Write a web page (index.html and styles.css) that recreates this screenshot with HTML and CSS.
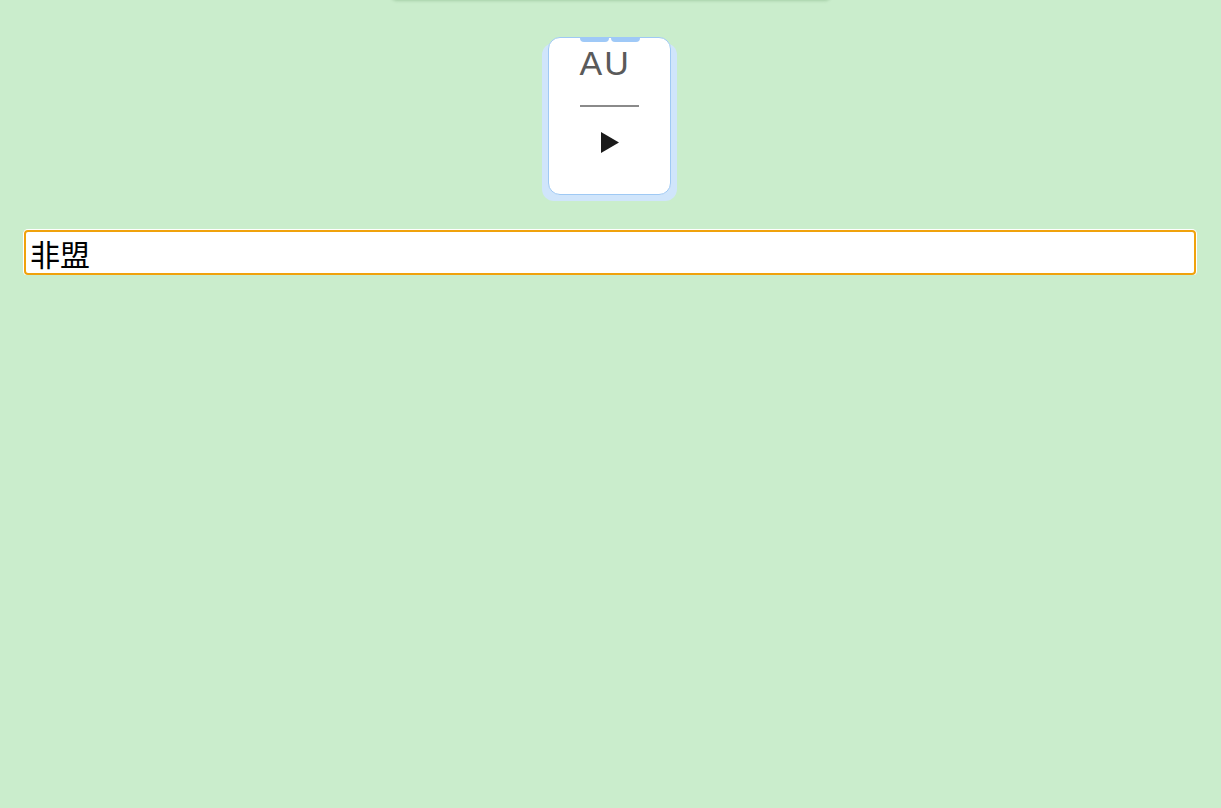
FILE: index.html
```html
<!DOCTYPE html>
<html lang="zh">
<head>
    <meta charset="UTF-8">
    <meta name="viewport" content="width=device-width, initial-scale=1.0">
    <title>Flash Card</title>
    <link rel="stylesheet" href="styles.css">
</head>
<body>
    <div class="topbar"></div>
    <div class="deck">
        <div class="card">
            <div class="tabs">
                <span class="tab"></span>
                <span class="tab"></span>
            </div>
            <div class="face">
                <div class="code">AU</div>
                <div class="rule"></div>
                <button type="button" class="play" aria-label="play">
                    <svg width="18" height="21" viewBox="0 0 18 21"><polygon points="0,0 18,10.5 0,21" fill="#1a1a1a"/></svg>
                </button>
            </div>
        </div>
    </div>
    <div class="answer">
        <input type="text" id="answerInput" value="非盟" autofocus>
    </div>

    <script>
        var input = document.getElementById('answerInput');
        input.focus();
        input.setSelectionRange(input.value.length, input.value.length);
    </script>
</body>
</html>
```

FILE: styles.css
```css
body {
    margin: 0;
    background: #caedcc;
    font-family: "Liberation Sans", Arial, sans-serif;
}
.topbar {
    width: 440px;
    height: 10px;
    margin: -10px auto 0;
    border-radius: 0 0 6px 6px;
    box-shadow: 0 1px 3px rgba(60, 120, 60, 0.25);
}
.deck {
    display: flex;
    justify-content: center;
    padding-top: 37px;
    padding-right: 3px;
}
.card {
    position: relative;
    width: 123px;
    height: 158px;
    box-sizing: border-box;
    background: #fff;
    border: 1px solid #9fc9f4;
    border-radius: 12px;
    box-shadow: -6px 6px 0 0 #d0e5fb, 6px 6px 0 0 #d0e5fb;
}
.tabs {
    position: absolute;
    top: -1px;
    left: 31px;
    display: flex;
    gap: 2px;
}
.tab {
    width: 29px;
    height: 5px;
    background: #9fc9f7;
    border-radius: 0 0 4px 4px;
}
.face {
    padding: 5px 0 0 31px;
}
.code {
    font-size: 34px;
    line-height: 40px;
    color: #5a5a5a;
    letter-spacing: 2px;
}
.rule {
    width: 59px;
    height: 2px;
    margin-top: 22px;
    background: #8a8a8a;
}
.play {
    display: block;
    margin: 25px 0 0 21px;
    padding: 0;
    border: none;
    background: none;
    line-height: 0;
    cursor: pointer;
}
.answer {
    margin: 35px 25px 0 24px;
}
.answer input {
    display: block;
    width: 100%;
    height: 45px;
    box-sizing: border-box;
    padding: 0 4px;
    border: 2px solid #f0a20c;
    border-radius: 4px;
    box-shadow: 0 0 0 1px #fff;
    outline: none;
    font-family: "Noto Sans CJK SC", sans-serif;
    font-size: 30px;
    color: #000;
    caret-color: #000;
    background: #fff;
}
```
